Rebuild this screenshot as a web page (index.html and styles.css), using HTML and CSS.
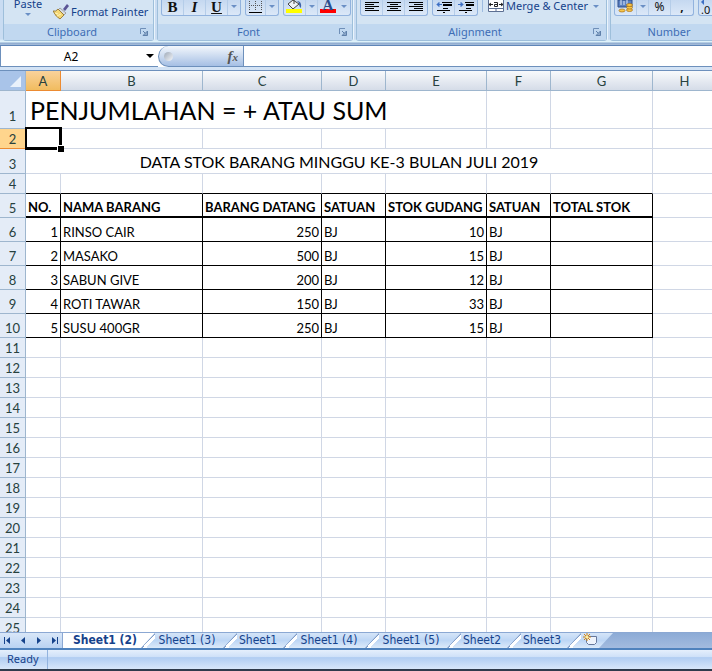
FILE: index.html
```html
<!DOCTYPE html>
<html lang="id">
<head>
    <meta charset="UTF-8">
    <meta name="viewport" content="width=device-width, initial-scale=1.0">
    <title>Data Stok Barang</title>
    <link rel="stylesheet" href="styles.css">
</head>
<body>
    <header class="ribbon">
        <section class="group group-clipboard">
            <div class="group-body">
                <button class="paste">Paste<span class="arrow"></span></button>
                <button class="painter">
                    <svg width="16" height="16" viewBox="0 0 16 16"><path d="M10 5l4-5 2 2-4 5z" fill="#5a5596"/><path d="M7 4l6 5-2 2-6-5z" fill="#d8dce4" stroke="#777" stroke-width=".6"/><path d="M5 5l6 6-4 4Q3 13 0 7q3 1 5-2z" fill="#f4d774" stroke="#8a6a22" stroke-width=".8"/><path d="M2 9l3 1m-1 2l4-2" stroke="#fff3b5"/></svg>
                    Format Painter
                </button>
            </div>
            <div class="group-title">Clipboard<button class="launcher" aria-label="Clipboard options"><svg width="8" height="8" viewBox="0 0 8 8"><path d="M.5 6V.5H6" fill="none" stroke="#6f8fb8"/><path d="M3 3l2 2M7.500 3v4.500H3z" fill="#8aa5c8" stroke="#5f80aa"/></svg></button></div>
        </section>
        <section class="group group-font">
            <div class="group-body">
                <div class="toolset">
                    <button class="tool bold">B</button>
                    <button class="tool italic">I</button>
                    <button class="tool underline">U</button>
                    <button class="tool drop" aria-label="Underline styles"><span class="arrow"></span></button>
                </div>
                <div class="toolset">
                    <button class="tool narrow" aria-label="Borders"><svg width="14" height="12" viewBox="0 0 14 12"><path d="M.5 0v10M6.500 0v10M12.500 0v10M0 4.500h13" stroke="#555" stroke-dasharray="1 1"/><path d="M0 11.500h13" stroke="#000"/></svg></button>
                    <button class="tool drop" aria-label="Border styles"><span class="arrow"></span></button>
                </div>
                <div class="toolset">
                    <button class="tool" aria-label="Fill colour"><svg width="17" height="13" viewBox="0 0 17 13"><path d="M7 0l6 4-6 5-5-5z" fill="#edf1f7" stroke="#444"/><path d="M8 0v4" stroke="#444"/><path d="M11 1q5 0 4 7-2-1-2-5z" fill="#3c62a8"/><path d="M0 9h16v4H0z" fill="#ff0"/></svg></button>
                    <button class="tool drop" aria-label="Fill palette"><span class="arrow"></span></button>
                    <button class="tool font-color" aria-label="Font colour">A</button>
                    <button class="tool drop" aria-label="Font palette"><span class="arrow"></span></button>
                </div>
            </div>
            <div class="group-title">Font<button class="launcher" aria-label="Font options"><svg width="8" height="8" viewBox="0 0 8 8"><path d="M.5 6V.5H6" fill="none" stroke="#6f8fb8"/><path d="M3 3l2 2M7.500 3v4.500H3z" fill="#8aa5c8" stroke="#5f80aa"/></svg></button></div>
        </section>
        <section class="group group-alignment">
            <div class="group-body">
                <div class="toolset">
                    <button class="tool" aria-label="Align left"><svg width="14" height="11" viewBox="0 0 14 11"><path d="M0 1.500h14M0 3.500h9M0 5.500h14M0 7.500h9M0 9.500h14" stroke="#000"/></svg></button>
                    <button class="tool" aria-label="Centre"><svg width="14" height="11" viewBox="0 0 14 11"><path d="M0 1.500h14M3 3.500h8M0 5.500h14M3 7.500h8M0 9.500h14" stroke="#000"/></svg></button>
                    <button class="tool" aria-label="Align right"><svg width="14" height="11" viewBox="0 0 14 11"><path d="M0 1.500h14M5 3.500h9M0 5.500h14M5 7.500h9M0 9.500h14" stroke="#000"/></svg></button>
                </div>
                <div class="toolset">
                    <button class="tool" aria-label="Decrease indent"><svg width="16" height="12" viewBox="0 0 16 12"><path d="M6 1.500h10M7 3.500h9M7 4.500h9M7 7.500h5M1 9.500h13M7 11.500h2" stroke="#000"/><path d="M6 3.500H1M3 1.500L1 3.500l2 2z" fill="#3d6fc4" stroke="#3d6fc4"/></svg></button>
                    <button class="tool" aria-label="Increase indent"><svg width="16" height="12" viewBox="0 0 16 12"><path d="M7 1.500h9M8 3.500h8M8 4.500h8M8 7.500h5M1 9.500h13M7 11.500h2" stroke="#000"/><path d="M0 3.500h5M3 1.500l2 2-2 2z" fill="#3d6fc4" stroke="#3d6fc4"/></svg></button>
                </div>
                <button class="merge">
                    <svg width="16" height="12" viewBox="0 0 16 12"><path d="M.5 0v11.500h15V0M.5 8.500h15M8 8v3" fill="#fff" stroke="#5c6f92"/><path d="M1 4.500h4M3 3L1 4.500 3 6M15 4.500h-4M13 3l2 1.500L13 6" fill="none" stroke="#222"/><path d="M6 2.500h3.500v4H6.500v-2h3" fill="none" stroke="#222"/></svg>
                    Merge &amp; Center<span class="arrow"></span>
                </button>
            </div>
            <div class="group-title">Alignment<button class="launcher" aria-label="Alignment options"><svg width="8" height="8" viewBox="0 0 8 8"><path d="M.5 6V.5H6" fill="none" stroke="#6f8fb8"/><path d="M3 3l2 2M7.500 3v4.500H3z" fill="#8aa5c8" stroke="#5f80aa"/></svg></button></div>
        </section>
        <section class="group group-number">
            <div class="group-body">
                <div class="toolset">
                    <button class="tool" aria-label="Accounting format"><svg width="17" height="13" viewBox="0 0 17 13"><path d="M1 0h14v7H1z" fill="#5b80c0" stroke="#2d4f8c"/><path d="M4 0v5M7 1v4M10 0v4" stroke="#dce8fa"/><g fill="#f7c64a" stroke="#a36b16" stroke-width=".7"><ellipse cx="12.500" cy="10" rx="3" ry="1.500"/><ellipse cx="12.500" cy="7.500" rx="3" ry="1.500"/><ellipse cx="12.500" cy="5" rx="3" ry="1.500"/><ellipse cx="5" cy="10.500" rx="3" ry="1.500"/></g></svg></button>
                    <button class="tool drop" aria-label="Currency list"><span class="arrow"></span></button>
                    <button class="tool percent">%</button>
                    <button class="tool comma">,</button>
                </div>
                <div class="toolset">
                    <button class="tool decimals"><span class="left-arrow"></span>.0</button>
                </div>
            </div>
            <div class="group-title">Number</div>
        </section>
    </header>

    <div class="formula-bar">
        <div class="name-box">
            <input type="text" class="cell-name" value="A2" aria-label="Name box">
            <button class="name-drop" aria-label="Named cells"><span class="arrow arrow-black"></span></button>
        </div>
        <div class="fx">
            <span class="knob"></span>
            <button class="fx-button" aria-label="Insert function"><i>f<small>x</small></i></button>
        </div>
        <input type="text" class="formula" aria-label="Formula">
    </div>

    <main class="grid">
        <table class="sheet">
            <colgroup>
                <col class="w-head"><col class="w-a"><col class="w-b"><col class="w-c"><col class="w-d"><col class="w-e"><col class="w-d"><col class="w-g"><col>
            </colgroup>
            <thead>
                <tr><th class="corner"><svg width="11" height="11" viewBox="0 0 11 11"><path d="M11 0v11H0z" fill="#e9f1fb"/></svg></th><th class="active">A</th><th>B</th><th>C</th><th>D</th><th>E</th><th>F</th><th>G</th><th>H</th></tr>
            </thead>
            <tbody>
                <tr class="row-title"><th>1</th><td colspan="5">PENJUMLAHAN = + ATAU SUM</td><td></td><td></td><td></td></tr>
                <tr><th class="active">2</th><td class="selected"></td><td></td><td></td><td></td><td></td><td></td><td></td><td></td></tr>
                <tr class="row-caption"><th>3</th><td colspan="7">DATA STOK BARANG MINGGU KE-3 BULAN JULI 2019</td><td></td></tr>
                <tr class="row-above"><th>4</th><td></td><td></td><td></td><td></td><td></td><td></td><td></td><td></td></tr>
                <tr class="data labels"><th>5</th><td>NO.</td><td>NAMA BARANG</td><td>BARANG DATANG</td><td>SATUAN</td><td>STOK GUDANG</td><td>SATUAN</td><td>TOTAL STOK</td><td></td></tr>
                <tr class="data"><th>6</th><td class="num">1</td><td>RINSO CAIR</td><td class="num">250</td><td>BJ</td><td class="num">10</td><td>BJ</td><td></td><td></td></tr>
                <tr class="data"><th>7</th><td class="num">2</td><td>MASAKO</td><td class="num">500</td><td>BJ</td><td class="num">15</td><td>BJ</td><td></td><td></td></tr>
                <tr class="data"><th>8</th><td class="num">3</td><td>SABUN GIVE</td><td class="num">200</td><td>BJ</td><td class="num">12</td><td>BJ</td><td></td><td></td></tr>
                <tr class="data"><th>9</th><td class="num">4</td><td>ROTI TAWAR</td><td class="num">150</td><td>BJ</td><td class="num">33</td><td>BJ</td><td></td><td></td></tr>
                <tr class="data"><th>10</th><td class="num">5</td><td>SUSU 400GR</td><td class="num">250</td><td>BJ</td><td class="num">15</td><td>BJ</td><td></td><td></td></tr>
                <tr><th>11</th><td></td><td></td><td></td><td></td><td></td><td></td><td></td><td></td></tr>
                <tr><th>12</th><td></td><td></td><td></td><td></td><td></td><td></td><td></td><td></td></tr>
                <tr><th>13</th><td></td><td></td><td></td><td></td><td></td><td></td><td></td><td></td></tr>
                <tr><th>14</th><td></td><td></td><td></td><td></td><td></td><td></td><td></td><td></td></tr>
                <tr><th>15</th><td></td><td></td><td></td><td></td><td></td><td></td><td></td><td></td></tr>
                <tr><th>16</th><td></td><td></td><td></td><td></td><td></td><td></td><td></td><td></td></tr>
                <tr><th>17</th><td></td><td></td><td></td><td></td><td></td><td></td><td></td><td></td></tr>
                <tr><th>18</th><td></td><td></td><td></td><td></td><td></td><td></td><td></td><td></td></tr>
                <tr><th>19</th><td></td><td></td><td></td><td></td><td></td><td></td><td></td><td></td></tr>
                <tr><th>20</th><td></td><td></td><td></td><td></td><td></td><td></td><td></td><td></td></tr>
                <tr><th>21</th><td></td><td></td><td></td><td></td><td></td><td></td><td></td><td></td></tr>
                <tr><th>22</th><td></td><td></td><td></td><td></td><td></td><td></td><td></td><td></td></tr>
                <tr><th>23</th><td></td><td></td><td></td><td></td><td></td><td></td><td></td><td></td></tr>
                <tr><th>24</th><td></td><td></td><td></td><td></td><td></td><td></td><td></td><td></td></tr>
                <tr><th>25</th><td></td><td></td><td></td><td></td><td></td><td></td><td></td><td></td></tr>
            </tbody>
        </table>
    </main>

    <nav class="tabs">
        <div class="tab-nav">
            <button aria-label="First sheet"><svg width="7" height="7" viewBox="0 0 7 7"><path d="M0 0h1v7H0zM6 0v7L2 3.500z" fill="#15428b"/></svg></button>
            <button aria-label="Previous sheet"><svg width="7" height="7" viewBox="0 0 7 7"><path d="M5 0v7L1 3.500z" fill="#15428b"/></svg></button>
            <button aria-label="Next sheet"><svg width="7" height="7" viewBox="0 0 7 7"><path d="M2 0v7l4-3.500z" fill="#15428b"/></svg></button>
            <button aria-label="Last sheet"><svg width="7" height="7" viewBox="0 0 7 7"><path d="M6 0h1v7H6zM1 0v7l4-3.500z" fill="#15428b"/></svg></button>
        </div>
        <button class="tab current">Sheet1 (2)</button>
        <button class="tab">Sheet1 (3)</button>
        <button class="tab short">Sheet1</button>
        <button class="tab">Sheet1 (4)</button>
        <button class="tab">Sheet1 (5)</button>
        <button class="tab short">Sheet2</button>
        <button class="tab short">Sheet3</button>
        <button class="tab new" aria-label="Insert sheet"><svg width="15" height="13" viewBox="0 0 15 13"><path d="M3.500 3.500h10v6l-2 2h-6l-2-2z" fill="#eef3fb" stroke="#66789c"/><path d="M4 0v8M0 4h8M1 1l6 6M7 1L1 7" stroke="#d48412"/><circle cx="4" cy="4" r="1.500" fill="#fff0a0"/></svg></button>
    </nav>
    <footer class="status"><span>Ready</span></footer>
</body>
</html>
```
FILE: styles.css
```css
* {
    box-sizing: border-box;
}
body {
    margin: 0;
    height: 100vh;
    display: flex;
    flex-direction: column;
    overflow: hidden;
    background-color: #c5d9f1;
    font-family: "Noto Sans", "Open Sans", sans-serif;
    font-size: 11px;
    color: #15428b;
}
button, input {
    font: inherit;
    color: inherit;
    border: none;
    background: none;
    padding: 0;
    margin: 0;
}
svg {
    display: block;
    flex: none;
}
.arrow {
    border: 3px solid transparent;
    border-top-color: #6a8fc5;
    border-bottom: none;
}
.arrow-black {
    border-width: 4px;
    border-bottom: none;
    border-top-color: #000;
}

/* ribbon */
.ribbon {
    display: flex;
    gap: 3px;
    flex: none;
    height: 45px;
    padding: 0 0 4px 3px;
    overflow: hidden;
    background: linear-gradient(#c9dcf2 0, #c9dcf2 39px, #dff3fb 41px, #dff3fb 42px, #8ba8cd 43px, #a9c0dc 45px);
}
.group {
    display: flex;
    flex-direction: column;
    flex: none;
    border: 1px solid #9ebfdb;
    border-top: none;
    border-radius: 0 0 3px 3px;
    background-color: #d4e4f3;
    box-shadow: 1px 0 #eaf4fc;
}
.group-clipboard {
    width: 151px;
}
.group-font {
    width: 196px;
}
.group-alignment {
    width: 251px;
}
.group-number {
    width: 118px;
}
.group-body {
    display: flex;
    align-items: flex-start;
    height: 24px;
    padding: 0 3px;
    gap: 4px;
}
.group-title {
    display: flex;
    align-items: center;
    height: 16px;
    padding-right: 5px;
    background-color: #c1d8f0;
    color: #3e6db5;
    line-height: 14px;
}
.group-title::before {
    content: "";
    margin-left: auto;
}
.group-title .launcher {
    margin-left: auto;
}
.group-number .group-title {
    justify-content: center;
    padding: 0;
}
.group-number .group-title::before {
    display: none;
}
.paste {
    display: flex;
    flex-direction: column;
    align-items: center;
    gap: 5px;
    width: 42px;
    line-height: 8px;
}
.painter, .merge {
    display: flex;
    align-items: center;
    gap: 2px;
    white-space: nowrap;
}
.painter {
    padding-top: 4px;
    line-height: 14px;
}
.merge {
    height: 12px;
    padding-left: 5px;
    border-left: 1px solid #9dbbe0;
    line-height: 12px;
}
.merge .arrow {
    margin-left: 3px;
}
.toolset {
    display: flex;
    flex: none;
    height: 16px;
    border: 1px solid #92b3de;
    border-top: none;
    border-radius: 0 0 3px 3px;
    background: linear-gradient(#c5d8f0, #dbe8f8);
}
.tool {
    display: flex;
    align-items: center;
    justify-content: center;
    width: 22px;
    padding-bottom: 2px;
    color: #111;
    border-right: 1px solid #b5cde9;
}
.tool:last-child {
    border-right: none;
}
.narrow {
    width: 20px;
}
.drop {
    width: 12px;
}
.bold, .italic, .underline, .font-color {
    font-family: "Liberation Serif", serif;
    font-size: 15px;
    font-weight: bold;
    line-height: 12px;
}
.italic {
    font-style: italic;
}
.underline {
    text-decoration: underline;
}
.font-color {
    height: 13px;
    width: 16px;
    margin: 0 2px;
    border-bottom: 4px solid #f00;
    border-right: none;
    color: #2b4c8c;
    line-height: 8px;
    padding: 0;
}
.percent, .comma {
    font-size: 12px;
    line-height: 12px;
}
.comma {
    font-weight: bold;
}
.decimals {
    flex-direction: column;
    align-items: flex-start;
    padding-left: 2px;
    line-height: 9px;
}
.left-arrow {
    border: 3px solid transparent;
    border-right-color: #3d6fc4;
    border-left: none;
}

/* formula bar */
.formula-bar {
    display: flex;
    flex: none;
    height: 25px;
    border-top: 1px solid #5f86b8;
    border-bottom: 3px solid #d3e3f5;
    background-color: #fff;
}
.name-box {
    display: flex;
    align-items: center;
    width: 158px;
    border-bottom: 1px solid #6d90bc;
    border-left: 1px solid #6d90bc;
}
.cell-name {
    flex: 1;
    min-width: 0;
    text-align: center;
    font-size: 12px;
    color: #000;
}
.name-drop {
    width: 17px;
}
.name-drop .arrow {
    display: block;
    width: 8px;
    margin: 0 auto;
}
.fx {
    display: flex;
    align-items: center;
    justify-content: space-between;
    width: 86px;
    padding: 0 5px;
    border: 1px solid #6d90bc;
    border-top: none;
    border-radius: 11px 0 0 11px;
    background: linear-gradient(#f3f7fc, #a5bfe4);
}
.knob {
    width: 9px;
    height: 9px;
    border-radius: 50%;
    background: linear-gradient(135deg, #9ea9b8, #f5f7fa);
}
.fx-button {
    font-family: "Liberation Serif", serif;
    font-size: 15px;
    font-weight: bold;
    line-height: 16px;
    color: #555;
}
.fx-button small {
    font-size: 11px;
}
.formula {
    flex: 1;
    min-width: 0;
    border-bottom: 1px solid #6d90bc;
}

/* worksheet */
.grid {
    flex: 1;
    min-height: 0;
    overflow: hidden;
    background-color: #fff;
    border-top: 1px solid #6d90bc;
    font-family: Lato, sans-serif;
    font-size: 13px;
    color: #000;
}
.sheet {
    table-layout: fixed;
    width: 100%;
    min-width: 717px;
    border-spacing: 0;
}
.w-head {
    width: 26px;
}
.w-a {
    width: 35px;
}
.w-b {
    width: 142px;
}
.w-c {
    width: 119px;
}
.w-d {
    width: 64px;
}
.w-e {
    width: 101px;
}
.w-g {
    width: 102px;
}
.sheet tr {
    height: 20px;
}
.sheet th, .sheet td {
    padding: 0 2px;
    border-right: 1px solid #d0d7e5;
    border-bottom: 1px solid #d0d7e5;
    line-height: 17px;
    vertical-align: bottom;
    white-space: nowrap;
}
.sheet th {
    padding: 0;
    border-color: #9eb6ce;
    background-color: #e4ecf7;
    color: #27413e;
    font-weight: normal;
    text-align: center;
}
.sheet thead th {
    background: linear-gradient(#f8fafc, #d5dce8);
}
.sheet thead .corner {
    background: #a9c4e9;
}
.corner svg {
    margin: 0 4px 3px auto;
}
.sheet thead .active {
    background: linear-gradient(#f9d29b, #f1bc5f);
    border-color: #ec8b32;
}
.sheet tbody .active {
    background-color: #ffd58d;
    border-color: #ec8b32;
}
.sheet .row-title {
    height: 38px;
}
.sheet .row-title th {
    padding-bottom: 3px;
}
.sheet .row-title td {
    padding-left: 4px;
    font-size: 25px;
    line-height: 35px;
}
.sheet .row-caption {
    height: 25px;
}
.sheet .row-caption td {
    font-size: 16px;
    line-height: 22px;
}
.row-caption td:nth-child(2) {
    text-align: center;
}
.selected {
    position: relative;
}
.selected::before {
    content: "";
    position: absolute;
    inset: -2px -2px -2px -1px;
    border: 2px solid #000;
    border-right-width: 3px;
    border-bottom-width: 3px;
}
.selected::after {
    content: "";
    position: absolute;
    right: -4px;
    bottom: -4px;
    width: 6px;
    height: 6px;
    background-color: #000;
    border: 1px solid #fff;
    border-width: 1px 0 0 1px;
}
.sheet .row-above td:not(:last-child) {
    border-bottom-color: #000;
}
.sheet .data {
    height: 24px;
}
.data td:not(:last-child) {
    border-color: #000;
}
.sheet .labels td {
    font-weight: bold;
}
.sheet .labels td:not(:last-child) {
    border-bottom-width: 2px;
}
.sheet .num {
    text-align: right;
}

/* sheet tabs */
.tabs {
    display: flex;
    flex: none;
    height: 16px;
    border-top: 1px solid #8ba8d3;
    background: linear-gradient(#8cabd6, #a3bbdf);
    font-family: "DejaVu Sans Condensed", "DejaVu Sans", sans-serif;
    font-size: 12px;
}
.tab-nav {
    display: flex;
    align-items: center;
    justify-content: space-around;
    width: 63px;
    border-right: 1px solid #8ba8d3;
    background: linear-gradient(#d9e7f8, #b9d2f2);
}
.tab {
    width: 96px;
    margin-right: -14px;
    padding-right: 4px;
    line-height: 15px;
    white-space: nowrap;
    background:
        linear-gradient(to bottom right, #7f9cc8 54%, #fff 54%, #fff 68%, transparent 68%) 0 0 / 14px 15px no-repeat,
        linear-gradient(#d5e5f8, #bdd6f5 50%, #dceafa);
    clip-path: polygon(14px 0, 100% 0, 100% 100%, 0 100%);
}
.short {
    width: 74px;
}
.current {
    width: 92px;
    padding-right: 8px;
    font-weight: bold;
    background: #fff;
    clip-path: none;
}
.new {
    display: flex;
    justify-content: center;
    width: 46px;
    padding: 0;
    clip-path: polygon(14px 0, 100% 0, calc(100% - 14px) 100%, 0 100%);
}

.status {
    display: flex;
    flex: none;
    height: 23px;
    border-top: 2px solid #4f82bd;
    border-bottom: 2px solid #2f3b4c;
    background: linear-gradient(#e5effc, #cfe1f8 35%, #b1cdf2 40%, #d8e7fa);
    line-height: 18px;
}
.status span {
    padding: 0 8px 0 7px;
    border-right: 1px solid #92b3de;
}
```
